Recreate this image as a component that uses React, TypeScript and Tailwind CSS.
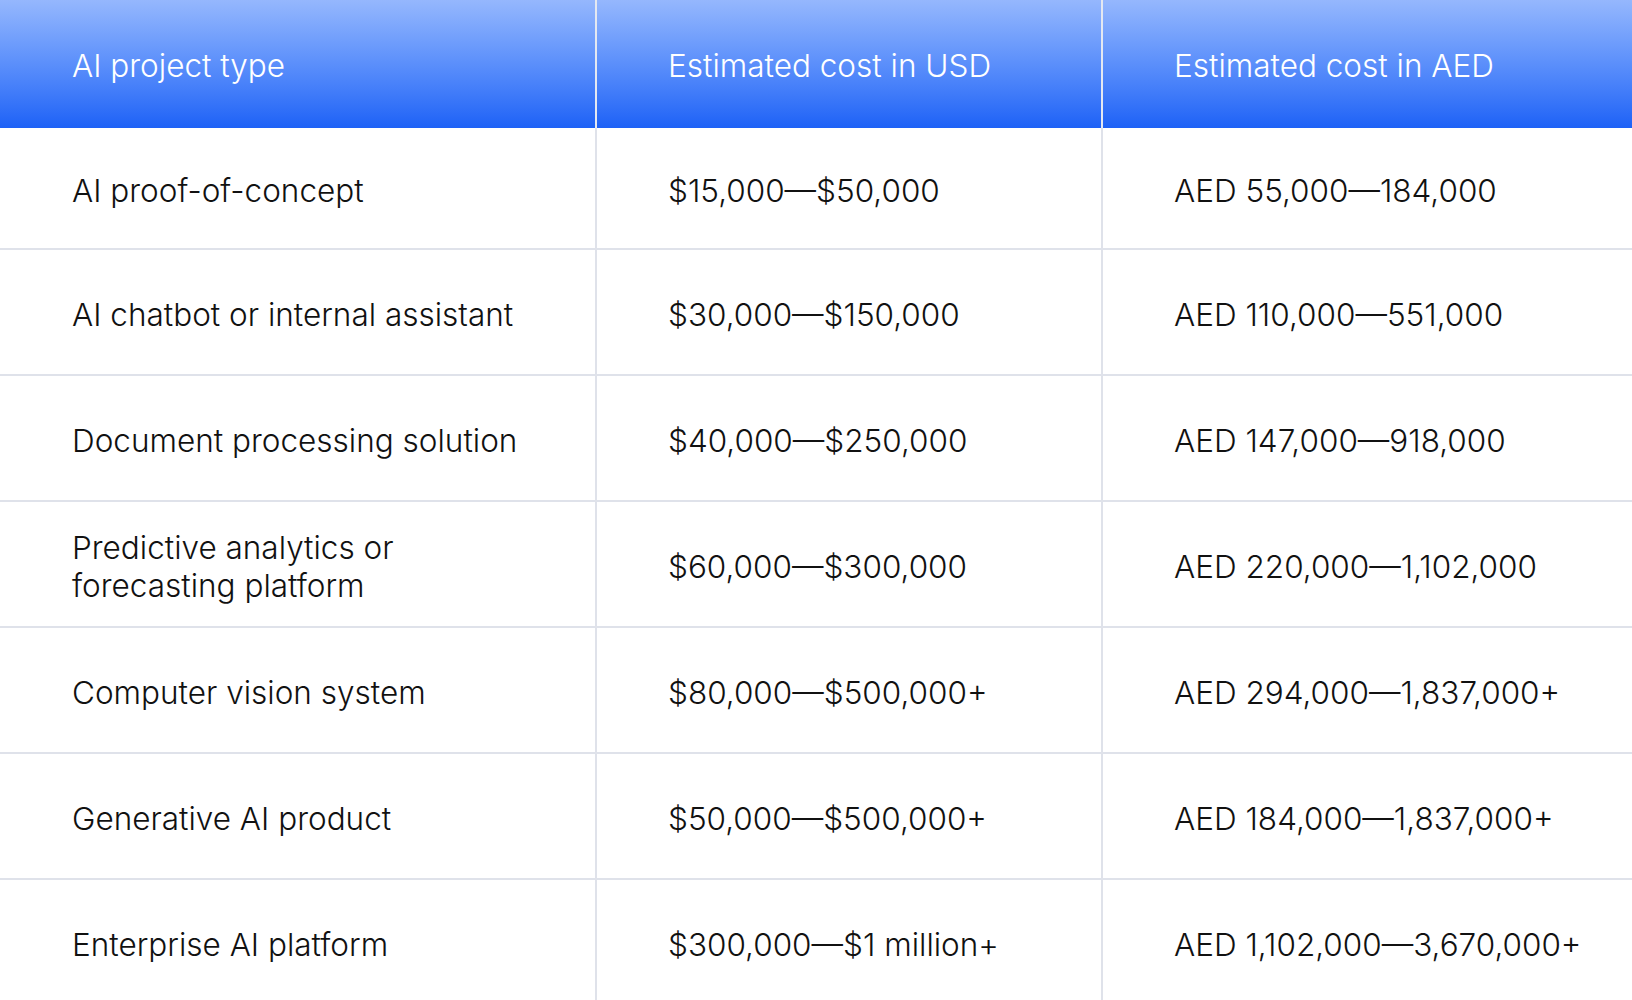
import * as React from 'react';

const rows: Array<[string[], string, string]> = [
  [['AI proof-of-concept'], '$15,000—$50,000', 'AED 55,000—184,000'],
  [['AI chatbot or internal assistant'], '$30,000—$150,000', 'AED 110,000—551,000'],
  [['Document processing solution'], '$40,000—$250,000', 'AED 147,000—918,000'],
  [
    ['Predictive analytics or', 'forecasting platform'],
    '$60,000—$300,000',
    'AED 220,000—1,102,000',
  ],
  [['Computer vision system'], '$80,000—$500,000+', 'AED 294,000—1,837,000+'],
  [['Generative AI product'], '$50,000—$500,000+', 'AED 184,000—1,837,000+'],
  [['Enterprise AI platform'], '$300,000—$1 million+', 'AED 1,102,000—3,670,000+'],
];

const font = { fontFamily: 'Inter, "Liberation Sans", sans-serif' };

export default function App() {
  return (
    <div
      className="h-screen w-full overflow-hidden bg-white text-[31.5px] font-[350] leading-[1.2] text-[#111111]"
      style={font}
    >
      <div className="grid grid-cols-[595px_506px_1fr]">
        {/* header */}
        <div className="flex h-[128px] items-center bg-gradient-to-b from-[#95b7fd] to-[#1d61f6] pl-[72px] pt-[3px] text-white">
          AI project type
        </div>
        <div className="flex h-[128px] items-center border-l-2 border-[#e4e8f1] bg-gradient-to-b from-[#95b7fd] to-[#1d61f6] pl-[71px] pt-[3px] text-white">
          Estimated cost in USD
        </div>
        <div className="flex h-[128px] items-center border-l-2 border-[#e4e8f1] bg-gradient-to-b from-[#95b7fd] to-[#1d61f6] pl-[71px] pt-[3px] text-white">
          Estimated cost in AED
        </div>

        {rows.map(([name, usd, aed], i) => {
          const h = i === 0 ? 'h-[120px]' : 'h-[126px] border-t-2 border-[#dfe2ea]';
          return (
            <React.Fragment key={i}>
              <div className={`flex flex-col justify-center pl-[72px] pt-[6px] ${h}`}>
                {name.map((l) => (
                  <span key={l}>{l}</span>
                ))}
              </div>
              <div
                className={`flex items-center border-l-2 border-l-[#dfe2ea] pl-[71px] pt-[6px] ${h}`}
              >
                {usd}
              </div>
              <div
                className={`flex items-center border-l-2 border-l-[#dfe2ea] pl-[71px] pt-[6px] ${h}`}
              >
                {aed}
              </div>
            </React.Fragment>
          );
        })}
      </div>
    </div>
  );
}
